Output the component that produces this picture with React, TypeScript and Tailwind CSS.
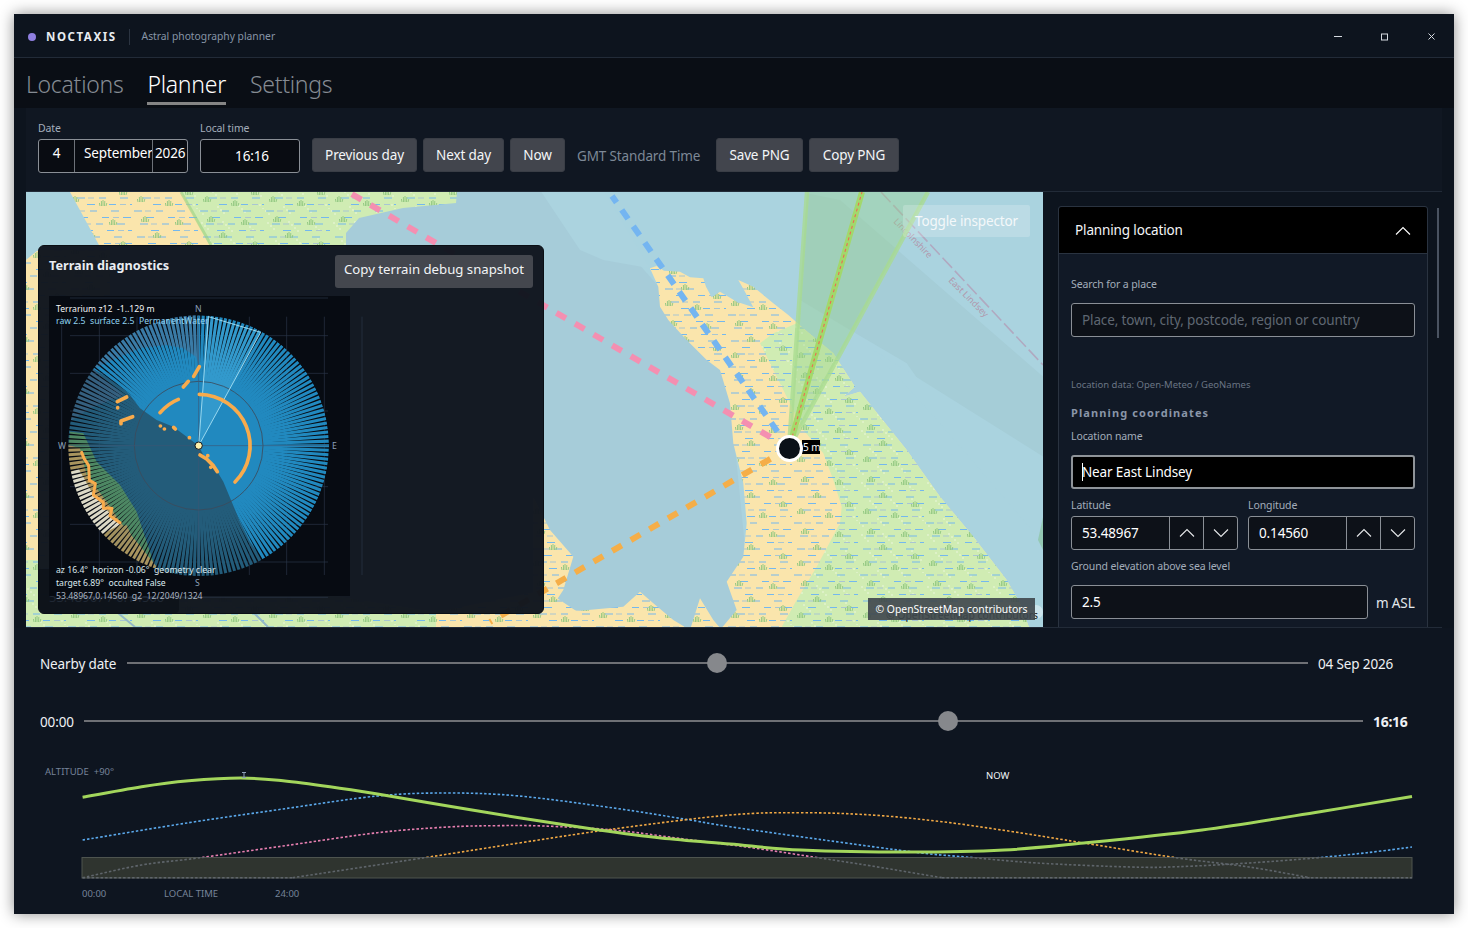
import React from "react";

const z4 = (pts: number[][]) => pts.map(([x, y]) => `${(540 + x / 3).toFixed(1)},${(190 + y / 3).toFixed(1)}`).join(" ");

function smooth(p: number[][]) {
  let d = `M${p[0][0]} ${p[0][1]}`;
  for (let i = 0; i < p.length - 1; i++) {
    const a = p[Math.max(i - 1, 0)], b = p[i], c = p[i + 1], e = p[Math.min(i + 2, p.length - 1)];
    d += ` C${(b[0] + (c[0] - a[0]) / 6).toFixed(1)} ${(b[1] + (c[1] - a[1]) / 6).toFixed(1)} ${(c[0] - (e[0] - b[0]) / 6).toFixed(1)} ${(c[1] - (e[1] - b[1]) / 6).toFixed(1)} ${c[0]} ${c[1]}`;
  }
  return d;
}

const greenCurve = [[82.6,797.3],[141.6,786.7],[188.8,780.7],[240.7,778],[283,780.7],[330,786.7],[377.5,794],[448,806],[519,817.7],[599,830],[661,838],[730,844],[801,850],[909,852],[1004,850],[1084,843],[1202,830],[1320,811.7],[1412,796.5]];
const blueCurve = [[82.6,840],[188.8,822.7],[283,809],[377.5,796],[448,793],[519,796],[613.5,808],[684,819],[730,826.7],[824,840],[919,852.7],[966,857],[1037,863],[1131,867],[1178,866.7],[1249,863],[1315,858],[1367,852.7],[1412,847]];
const pinkCurve = [[82.6,877.7],[141.6,865],[198,858],[283,846],[377.5,832.7],[448,827],[495.5,825.7],[543,826],[613.5,830],[684,839],[753.6,848],[819.7,858],[871.6,866],[942,877.7]];
const pinkFlat = "M942 877.7 H1412";
const orangeCurve = [[292.6,877.7],[424.7,857.7],[519,843],[613.5,829],[730,815],[801,812.7],[871.6,815],[942,821.7],[1013,831.7],[1084,843],[1178,858],[1249,867],[1310,877.7]];

function Chevron({ up, className }: { up?: boolean; className?: string }) {
  return (
    <svg viewBox="0 0 16 10" className={className} fill="none" stroke="currentColor" strokeWidth="1.1">
      <polyline points={up ? "1,8.5 8,1.5 15,8.5" : "1,1.5 8,8.5 15,1.5"} />
    </svg>
  );
}

// Tiled dash texture for the mud and marsh areas
const TILE_W = 66, TILE_H = 52;
const rowOffsets = [2, 14, 8, 19, 5, 16, 11, 21];
const blueDashes = rowOffsets.map((o, i) => `M${o} ${3 + i * 6.5}h8M${o + 22} ${3 + i * 6.5}h7M${o + 43} ${3 + i * 6.5}h${Math.min(8, 66 - o - 43)}`).join("");
const greyDashes = rowOffsets.map((o, i) => `M${o + 11 + (i % 2) * 22} ${3 + i * 6.5}h6`).join("");
const whiteDots = Array.from({ length: 30 }, (_, i) => [(i * 29 + 5) % TILE_W, (i * 17 + 6) % TILE_H]);

function Texture({ id, base, dots }: { id: string; base: string; dots?: boolean }) {
  return (
    <pattern id={id} width={TILE_W} height={TILE_H} patternUnits="userSpaceOnUse">
      <rect width={TILE_W} height={TILE_H} fill={base} />
      {dots && <g fill="#f6fbec">{whiteDots.map(([x, y], i) => <circle key={i} cx={x} cy={y} r=".7" />)}</g>}
      <path d={greyDashes} stroke="#a9c6d2" strokeWidth="1.1" />
      <path d={blueDashes} stroke="#74b8ee" strokeWidth="1.1" />
      <use href="#tuft" x="13" y="11" />
      <use href="#tuft" x="47" y="14" />
      <use href="#tuft" x="25" y="27" />
      <use href="#tuft" x="57" y="36" />
      <use href="#tuft" x="9" y="43" />
      <use href="#tuft" x="37" y="47" />
    </pattern>
  );
}

function MapDrawing() {
  const sandMain = z4([[330,235],[350,228],[372,242],[420,245],[450,262],[490,265],[498,290],[515,322],[540,305],[590,335],[640,352],[612,300],[595,270],[640,290],[700,340],[745,375],[790,415],[880,490],[945,590],[910,620],[960,605],[1020,680],[1100,780],[1200,920],[1300,1040],[1400,1170],[1440,1240],[1470,1320],[540,1320],[590,1260],[560,1175],[610,1100],[620,1000],[610,880],[580,760],[570,640],[540,540],[500,510],[440,450],[385,390],[360,350],[355,290]]);
  const sandLow = z4([[-20,920],[30,1020],[100,1100],[70,1200],[30,1260],[120,1262],[250,1250],[300,1205],[340,1240],[400,1290],[450,1320],[480,1225],[520,1290],[545,1320],[-20,1320]]);
  const greenMain = z4([[770,400],[880,490],[945,590],[910,620],[960,605],[1020,680],[1100,780],[1200,920],[1300,1040],[1400,1170],[1440,1240],[1470,1320],[720,1320],[770,1230],[830,1130],[900,1000],[905,950],[880,870],[850,790],[790,720],[660,460],[700,430]]);
  return (
    <svg viewBox="26 192 1017 435" className="absolute inset-0 w-full h-full">
      <defs>
        <g id="tuft" stroke="#8fc67e" strokeWidth="0.9" fill="none">
          <path d="M-3 3 L-3.6 0 M-1.5 3 L-1.6 -2 M0 3 L0 -3 M1.5 3 L1.8 -2 M3 3 L3.8 0" />
        </g>
        <Texture id="sand" base="#fae5ac" />
        <Texture id="marsh" base="#d0ecb3" dots />
        <clipPath id="mapClip"><rect x="26" y="192" width="1017" height="435" /></clipPath>
      </defs>
      <g clipPath="url(#mapClip)">
        <rect x="26" y="192" width="1017" height="435" fill="#aad3df" />
        <polygon points={z4([[-600,0],[100,0],[560,520],[640,1320],[-600,1320]])} fill="#a6ccd9" />
        <polygon points={z4([[0,0],[190,0],[330,235],[190,210],[120,180]])} fill="#abd3df" />
        <polygon points={z4([[900,30],[1510,560],[1510,1020],[1240,720],[1100,520],[930,420],[780,330],[800,10]])} fill="#a5cdd7" />
        <polygon points={z4([[1000,480],[1510,800],[1510,1060],[1200,700]])} fill="#aad3df" />
        <polygon points="70,192 181,192 211,245 99,245" fill="url(#sand)" />
        <polygon points="26,260 38,250 110,250 110,600 26,600" fill="url(#sand)" />
        <polygon points="181,192 457,192 456,203 403,208 359,218 346,233 346,248 211,248" fill="url(#marsh)" />
        <path d="M181 192 L211 245" stroke="#98cf7c" strokeWidth="3" opacity=".55" />
        <polygon points="26,560 110,560 436,612 436,627 26,627" fill="url(#marsh)" />
        <polygon points="436,612 545,590 600,627 436,627" fill="url(#sand)" />
        <polygon points={sandLow} fill="url(#sand)" />
        <polygon points={sandMain} fill="url(#sand)" />
        <polygon points={greenMain} fill="url(#marsh)" />
        <path d="M118 613 L135 627 M253 612 L268 627" stroke="#94b9c8" strokeWidth="2" />
        <path d="M1043 517 L1038 540 L1043 550 Z" fill="#8ec6a8" opacity=".8" />

        <path d="M881 192 L1043 365" stroke="#b2a2bb" strokeWidth="1.6" strokeDasharray="14 4" opacity=".85" />
        <g fontFamily='"Noto Sans", sans-serif' fontSize="9" fill="#b197ac">
          <text transform="translate(893 222) rotate(46)">Lincolnshire</text>
          <text transform="translate(948 281) rotate(45)">East Lindsey</text>
        </g>

        <polygon points="789,448 807,192 928,192" fill="#98d38a" opacity=".38" />
        <path d="M789 448 L807 192 M789 448 L928 192" stroke="#a9dc8f" strokeWidth="4.5" opacity=".75" />
        <path d="M789 448 L862 192" stroke="#a2d968" strokeWidth="6" opacity=".95" />
        <path d="M789 448 L862 192" stroke="#ee6a52" strokeWidth="1.1" strokeDasharray="3 3" />
        <path d="M789 448 L350 193" stroke="#f48fb1" strokeWidth="6" strokeDasharray="11 10.5" fill="none" />
        <path d="M789 448 L612 196" stroke="#74b5f1" strokeWidth="6" strokeDasharray="11 9" fill="none" />
        <path d="M789 448 L490 622" stroke="#f5ae48" strokeWidth="6" strokeDasharray="11 10.5" fill="none" />
      </g>
    </svg>
  );
}

function Radar() {
  const cx = 476, cy = 452, R = 391;
  const spokes = Array.from({ length: 180 }, (_, i) => {
    const a = (i * 2 * Math.PI) / 180;
    return <line key={i} x1={cx} y1={cy} x2={cx + R * Math.cos(a)} y2={cy + R * Math.sin(a)} />;
  });
  const hLines = [9, 122, 235, 348, 575, 688, 801, 907];
  const vLines = [65, 178, 291, 515, 628, 740, 853, 966];
  return (
    <svg viewBox="0 0 960 930" className="absolute left-[-9px] top-[-1px] w-[320px] h-[310px] overflow-visible">
      <defs>
        <mask id="spokeMask" maskUnits="userSpaceOnUse" x="0" y="0" width="960" height="930">
          <g stroke="#fff" strokeWidth="9.2">{spokes}</g>
        </mask>
      </defs>
      <g stroke="#2a3748" strokeWidth="2">
        {hLines.map((y) => <line key={y} x1="90" x2="864" y1={y} y2={y} />)}
        {vLines.map((x) => <line key={x} x1={x} x2={x} y1="65" y2="840" />)}
      </g>
      <g mask="url(#spokeMask)">
        <circle cx={cx} cy={cy} r={R} fill="#2189bf" />
        <polygon points="476,452 505,60 665,112" fill="#3aa0d2" opacity=".7" />
        <polygon points="478,215 468,185 430,160 380,150 300,160 230,190 160,222 20,400 100,60 470,40" fill="#3a7ba6" />
        <polygon points="160,222 225,260 270,300 300,340 350,375 400,395 440,425 476,452 490,480 520,510 550,560 575,620 600,680 630,740 672,800 400,900 60,900 20,300" fill="#235c7a" />
        <polygon points="160,222 80,300 60,400 150,340 250,300" fill="#35607f" />
        <polygon points="90,410 130,415 170,500 240,570 290,650 340,800 280,860 60,700" fill="#4d8763" />
        <polygon points="85,450 120,460 140,540 200,620 240,680 290,740 350,815 300,850 60,700" fill="#a8945e" />
        <polygon points="85,535 115,520 160,600 205,650 240,690 180,720 70,640" fill="#dcd9c6" />
        <polygon points="205,710 260,690 290,760 230,760" fill="#a0905f" />
      </g>
      <circle cx={cx} cy={cy} r="193" fill="none" stroke="#3c4a5c" strokeWidth="2.5" />
      <path d={`M${cx - R} ${cy} H${cx + R} M${cx} ${cy - R} V${cy + R}`} stroke="#3c5672" strokeWidth="2.5" opacity=".75" />
      <path d="M476 452 L505 65 L662 112 L476 452" stroke="#a9e2f4" strokeWidth="2.6" fill="none" />
      <g stroke="#f8ab4c" strokeWidth="11" fill="none" strokeLinecap="round" strokeLinejoin="round">
        <path d="M478 298 A154 154 0 0 1 585 561" />
        <path d="M360 353 Q385 325 415 313" />
        <path d="M430 276 L445 259 M461 244 L478 215" />
        <path d="M232 320 L260 306 M233 338 L233 339" />
        <path d="M243 386 L243 378 L278 365" />
        <path d="M361 393 h.5 M373 402 h.5 M401 397 L406 402 M448 428 h.5" />
        <path d="M480 480 L500 492 L520 512 L532 530 M503 482 h.5 M512 517 h.5" />
        <path d="M125 472 L132 490 L146 512 L148 556 L166 566 L160 600 L190 622 L190 640 L216 640 L210 662 L240 683" strokeWidth="9" />
      </g>
      <circle cx={cx} cy={cy} r="11" fill="#fdf0ab" stroke="#10151c" strokeWidth="3" />
      <g fontFamily='"Noto Sans", sans-serif' fontSize="26">
        <text x="48" y="50" fill="#f3f6f8">{"Terrarium z12\u00a0\u00a0-1..129 m"}</text>
        <text x="48" y="86" fill="#8fd2f0">{"raw 2.5\u00a0\u00a0surface 2.5\u00a0\u00a0PermanentWater"}</text>
        <text x="465" y="50" fill="#8ca0b8">N</text>
        <text x="54" y="461" fill="#8ca0b8">W</text>
        <text x="876" y="461" fill="#8ca0b8">E</text>
        <text x="465" y="872" fill="#8ca0b8">S</text>
        <text x="48" y="833" fill="#dce9ee">{"az 16.4°\u00a0\u00a0horizon -0.06°\u00a0\u00a0geometry clear"}</text>
        <text x="48" y="872" fill="#dce9ee">{"target 6.89°\u00a0\u00a0occulted False"}</text>
        <text x="48" y="911" fill="#aab4c0">{"53.48967,0.14560\u00a0\u00a0g2\u00a0\u00a012/2049/1324"}</text>
      </g>
    </svg>
  );
}

function Chart() {
  const colored: [number[][], string][] = [[blueCurve, "#5ba9ec"], [pinkCurve, "#e77fb0"], [orangeCurve, "#f2a944"]];
  return (
    <svg viewBox="14 756 1440 150" className="w-[1440px] h-[150px] block">
      <defs>
        <clipPath id="aboveBand"><rect x="80" y="756" width="1340" height="101" /></clipPath>
        <clipPath id="band"><rect x="80" y="857" width="1340" height="23" /></clipPath>
      </defs>
      <rect x="82" y="857.5" width="1330" height="20.5" fill="#2f342f" stroke="#4e544f" strokeWidth="1" />
      <path d="M82.6 877.7 H292.6" fill="none" stroke="#5f656b" strokeWidth="1.6" strokeDasharray="2.5 2" />
      <path d={pinkFlat} fill="none" stroke="#5f656b" strokeWidth="1.6" strokeDasharray="2.5 2" />
      {colored.map(([c, col]) => (
        <g key={col} fill="none" strokeWidth="1.6" strokeDasharray="2.5 2">
          <path d={smooth(c)} stroke={col} clipPath="url(#aboveBand)" />
          <path d={smooth(c)} stroke="#5f656b" clipPath="url(#band)" />
        </g>
      ))}
      <path d={smooth(greenCurve)} fill="none" stroke="#a3d65c" strokeWidth="3" />
      <path d="M242 772.5h4M244 772.5v5M242 777.5h4" stroke="#8ea0b8" strokeWidth="1" fill="none" />
      <g fontFamily='"Noto Sans", sans-serif' fontSize="9.5">
        <text x="45" y="775" fill="#76849a">{"ALTITUDE\u00a0\u00a0+90°"}</text>
        <text x="986" y="779" fill="#f2f5f8">NOW</text>
        <text x="82" y="897" fill="#76849a">00:00</text>
        <text x="164" y="897" fill="#76849a">LOCAL TIME</text>
        <text x="275" y="897" fill="#76849a">24:00</text>
      </g>
    </svg>
  );
}

function Btn({ children, w }: { children: React.ReactNode; w: string }) {
  return (
    <button className={`${w} h-[34px] shrink-0 rounded-[3px] bg-[#42454d] text-[13.5px] tracking-[-0.01em] text-[#f4f6f8] border border-[#3a3e46]`}>{children}</button>
  );
}

function SpinField({ value }: { value: string }) {
  return (
    <div className="flex-1 h-[34px] flex rounded-[3px] border border-[#8a8f96] bg-[#0d1118] text-[13.5px] tracking-[-0.01em] text-white">
      <div className="flex-1 pl-[10px] leading-[32px]">{value}</div>
      <div className="w-[34px] border-l border-[#8a8f96] flex items-center justify-center"><Chevron up className="w-[16px] h-[10px] text-[#e6e8ea]" /></div>
      <div className="w-[34px] border-l border-[#8a8f96] flex items-center justify-center"><Chevron className="w-[16px] h-[10px] text-[#e6e8ea]" /></div>
    </div>
  );
}

const labelCls = "text-[10.5px] tracking-[-0.01em] leading-[15px] text-[#a3adba]";
const bodyCls = "text-[13.5px] tracking-[-0.01em]";

export default function App() {
  return (
    <div className="w-[1468px] h-[928px] bg-white p-[14px] overflow-hidden font-['Noto_Sans',sans-serif]">
      <div className="w-[1440px] h-[900px] bg-[#0d141e] shadow-[0_0_14px_rgba(0,0,0,0.45)] flex flex-col overflow-hidden">
        <div className="h-[44px] shrink-0 flex items-center border-b border-[#222b38] pt-[2px] pl-[14px] pr-[17px]">
          <span className="w-[8px] h-[8px] rounded-full bg-[#8f7fe0]" />
          <span className="ml-[10px] text-[11.5px] font-bold tracking-[0.135em] text-[#e8ecf1]">NOCTAXIS</span>
          <span className="ml-[12px] w-px h-[16px] bg-[#2b3441]" />
          <span className="ml-[12px] text-[10.3px] text-[#8794a6]">Astral photography planner</span>
          <div className="ml-auto flex items-center gap-[36px]">
            <svg viewBox="0 0 11 11" className="w-[11px] h-[11px]" stroke="#d5dae0" strokeWidth="1" fill="none"><path d="M2 5.5h8" /></svg>
            <svg viewBox="0 0 11 11" className="w-[11px] h-[11px]" stroke="#d5dae0" strokeWidth="1" fill="none"><rect x="2.5" y="3" width="6" height="6" /></svg>
            <svg viewBox="0 0 11 11" className="w-[11px] h-[11px]" stroke="#d5dae0" strokeWidth="1" fill="none"><path d="M2.5 2.5l6 6M8.5 2.5l-6 6" /></svg>
          </div>
        </div>

        <div className="h-[50px] shrink-0 bg-[#0a0e15] px-[12px] flex gap-[24px] text-[23px] tracking-[-0.012em] font-light">
          <div className="h-[47px] pt-[8px] leading-[36px] text-[#858b93]">Locations</div>
          <div className="h-[47px] pt-[8px] leading-[36px] text-white border-b-[3px] border-[#858585]">Planner</div>
          <div className="h-[47px] pt-[8px] leading-[36px] text-[#858b93]">Settings</div>
        </div>

        <div className="mx-[12px] w-[1416px] flex flex-col shrink-0 bg-[#101722]">
          <div className="h-[84px] border-b border-[#222b38] pl-[12px] flex items-start">
            <div className="mt-[13px] w-[150px]">
              <div className={labelCls + " h-[18px]"}>Date</div>
              <div className={`h-[34px] flex rounded-[3px] border border-[#8a8f96] bg-[#090c12] text-white ${bodyCls}`}>
                <div className="w-[35px] text-center leading-[26px]">4</div>
                <div className="w-[78px] border-l border-[#6d7279] pl-[9px] leading-[26px] whitespace-nowrap">September</div>
                <div className="flex-1 border-l border-[#6d7279] pl-[2px] leading-[26px]">2026</div>
              </div>
            </div>
            <div className="mt-[13px] ml-[12px] w-[100px]">
              <div className={labelCls + " h-[18px]"}>Local time</div>
              <div className={`h-[34px] rounded-[3px] border border-[#8a8f96] bg-[#090c12] text-white text-center pl-[4px] leading-[32px] ${bodyCls}`}>16:16</div>
            </div>
            <div className="mt-[30px] ml-[12px] flex items-center">
              <Btn w="w-[105px]">Previous day</Btn>
              <div className="w-[6px]" />
              <Btn w="w-[81px]">Next day</Btn>
              <div className="w-[6px]" />
              <Btn w="w-[55px]">Now</Btn>
              <div className="w-[12px]" />
              <span className={`w-[139px] pt-[2px] text-[#7d8896] whitespace-nowrap ${bodyCls}`}>GMT Standard Time</span>
              <Btn w="w-[87px]">Save PNG</Btn>
              <div className="w-[6px]" />
              <Btn w="w-[90px]">Copy PNG</Btn>
            </div>
          </div>

          <div className="h-[436px] flex border-b border-[#222b38]">
            <div className="relative w-[1017px] h-[435px] overflow-hidden">
              <MapDrawing />
              <div className="absolute left-[1003px] top-[413px] w-[14px] h-[14px] rounded-full bg-white/40" />
              <div className="absolute left-[860px] top-[416px] text-[10.4px] leading-[14px] text-[#1a1a1a] whitespace-nowrap">© OpenStreetMap contributors</div>
              <div className="absolute left-[842px] top-[406px] w-[167px] h-[22px] bg-[#3e464c]/90 text-[10.4px] leading-[22px] text-white text-center whitespace-nowrap">© OpenStreetMap contributors</div>
              <div className={`absolute left-[877px] top-[13px] w-[127px] h-[32px] rounded-[2px] bg-white/20 leading-[32px] text-[#f4f8fa] text-center ${bodyCls}`}>Toggle inspector</div>
              <div className="absolute left-[776px] top-[248px] w-[18px] h-[14px] bg-black text-[10px] leading-[14px] text-white pl-[1px] whitespace-nowrap">5 m</div>
              <div className="absolute left-[750px] top-[243px] w-[27px] h-[27px] rounded-full bg-[#0a1018] border-[3px] border-white" />

              <div className="absolute left-[12px] top-[53px] w-[506px] h-[369px] rounded-[6px] bg-[#10161f]/[0.975] border border-[#0b0f15]">
                <div className="absolute left-0 bottom-0 w-[140px] h-[44px] rounded-bl-[6px] rounded-r-[4px] bg-[#0a0f16]/60 pl-[10px] pt-[19px] text-[13px] text-[#202834] whitespace-nowrap">53.48967 / 0.14560</div>
                <div className="flex items-start justify-between pl-[10px] pr-[10px] pt-[9px]">
                  <div className="text-[12.7px] font-bold leading-[20px] text-[#e9edf2]">Terrain diagnostics</div>
                  <button className="w-[198px] h-[33px] pb-[4px] rounded-[3px] bg-[#44474e] text-[13.2px] text-[#f2f4f6]">Copy terrain debug snapshot</button>
                </div>
                <div className="relative ml-[10px] mt-[8px] w-[301px] h-[300px] bg-[#070b12]">
                  <Radar />
                </div>
              </div>
            </div>

            <div className="relative w-[399px] h-[435px] overflow-hidden bg-[#0d141e] pl-[15px] pt-[14px]">
              <div className="absolute right-[3px] top-[16px] w-[2px] h-[130px] bg-[#4a5361]" />
              <div className="w-[370px] rounded-t-[3px] border border-[#2a3340] bg-[#111926] h-[440px]">
                <div className="h-[47px] pt-[1px] bg-black border-b border-[#2a3340] rounded-t-[3px] flex items-center justify-between pl-[16px] pr-[16px]">
                  <span className={`text-[#f4f6f8] ${bodyCls}`}>Planning location</span>
                  <Chevron up className="w-[16px] h-[10px] text-white" />
                </div>
                <div className="pl-[12px] pr-[12px] pt-[23px]">
                  <div className={labelCls + " h-[15px]"}>Search for a place</div>
                  <div className={`mt-[11px] h-[34px] rounded-[3px] border border-[#8a8f96] bg-[#0d1118] pl-[10px] leading-[32px] text-[#5f6772] ${bodyCls}`}>Place, town, city, postcode, region or country</div>
                  <div className="mt-[40px] h-[15px] text-[9.5px] leading-[15px] text-[#6a7584]">Location data: Open-Meteo / GeoNames</div>
                  <div className="mt-[13px] h-[15px] text-[11px] leading-[15px] font-bold tracking-[0.1em] text-[#8a96a8]">Planning coordinates</div>
                  <div className={labelCls + " mt-[9px] h-[15px]"}>Location name</div>
                  <div className={`mt-[11px] h-[34px] rounded-[3px] border-2 border-[#8f9499] bg-black pl-[9px] leading-[30px] text-white flex items-center ${bodyCls}`}>
                    <span className="w-px h-[18px] bg-white -mr-px" />Near East Lindsey
                  </div>
                  <div className="mt-[9px] flex gap-[10px]">
                    <div className="flex-1"><div className={labelCls + " h-[18px]"}>Latitude</div><SpinField value="53.48967" /></div>
                    <div className="flex-1"><div className={labelCls + " h-[18px]"}>Longitude</div><SpinField value="0.14560" /></div>
                  </div>
                  <div className={labelCls + " mt-[9px] h-[15px]"}>Ground elevation above sea level</div>
                  <div className="mt-[11px] flex items-center">
                    <div className={`w-[297px] shrink-0 h-[34px] rounded-[3px] border border-[#8a8f96] bg-[#0d1118] pl-[10px] leading-[32px] text-white ${bodyCls}`}>2.5</div>
                    <span className={`ml-[8px] mt-[2px] text-[#e4e8ec] whitespace-nowrap ${bodyCls}`}>m ASL</span>
                  </div>
                </div>
              </div>
            </div>
          </div>
        </div>

        <div className="flex-1 bg-[#0e1520]">
          <div className={`ml-[26px] w-[1380px] mt-[20px] h-[30px] flex items-center text-[#eef1f4] ${bodyCls}`}>
            <span className="w-[87px] shrink-0 pt-[2px]">Nearby date</span>
            <div className="relative flex-1 h-[2px] bg-[#6e7075]">
              <span className="absolute left-[49.95%] top-1/2 -translate-x-1/2 -translate-y-1/2 w-[20px] h-[20px] rounded-full bg-[#86888c]" />
            </div>
            <span className="w-[112px] shrink-0 pl-[10px] pt-[2px]">04 Sep 2026</span>
          </div>
          <div className={`ml-[26px] w-[1380px] mt-[28px] h-[30px] flex items-center text-[#eef1f4] ${bodyCls}`}>
            <span className="w-[44px] shrink-0 pt-[2px]">00:00</span>
            <div className="relative flex-1 h-[2px] bg-[#6e7075]">
              <span className="absolute left-[67.55%] top-1/2 -translate-x-1/2 -translate-y-1/2 w-[20px] h-[20px] rounded-full bg-[#86888c]" />
            </div>
            <span className="w-[57px] shrink-0 pl-[10px] font-bold text-[14px] tracking-[-0.02em]">16:16</span>
          </div>
          <div className="mt-[20px]"><Chart /></div>
        </div>
      </div>
    </div>
  );
}
